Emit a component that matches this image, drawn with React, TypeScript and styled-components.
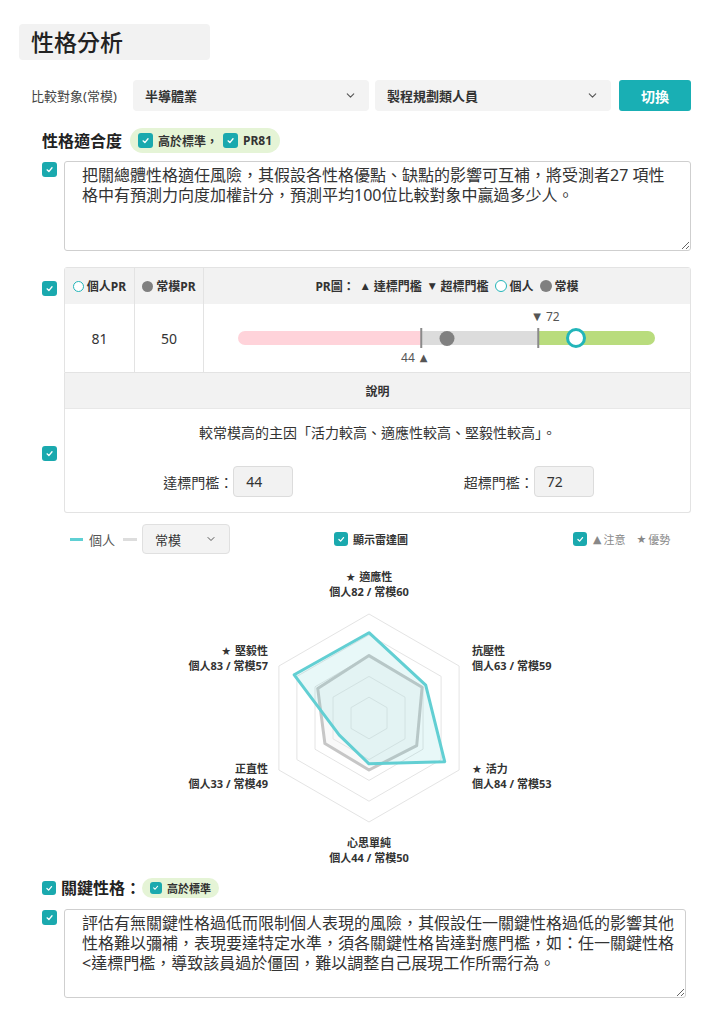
import React from "react";
import styled, { createGlobalStyle } from "styled-components";
import { ChevronDown } from "lucide-react";

const TEAL = "#1aa9ae";
const RING = "#22b5b9";

const GlobalStyle = createGlobalStyle`
  html, body { margin: 0; padding: 0; background: #fff; }
  body { font-family: "Noto Sans", "Noto Sans CJK TC", sans-serif; color: #333; }
  * { box-sizing: border-box; }
`;

const Page = styled.div`
  width: 711px;
  padding: 24px 20px 0 19px;
`;

const TitleBox = styled.div`
  width: 191px;
  height: 36px;
  background: #f2f2f2;
  border-radius: 4px;
  display: flex;
  align-items: center;
  padding-left: 12px;
  font-size: 23px;
  font-weight: 500;
  color: #222;
  line-height: 1;
`;

const CompareRow = styled.div`
  margin-top: 20px;
  height: 31px;
  display: flex;
  align-items: center;
  padding-left: 12px;
`;

const CompareLabel = styled.span`
  width: 104px;
  font-size: 13px;
  color: #444;
`;

const SelectBox = styled.div<{ $w: number; $h: number; $mr: number; $bold?: boolean; $bordered?: boolean }>`
  width: ${(p) => p.$w}px;
  height: ${(p) => p.$h}px;
  background: #f3f3f3;
  border-radius: 4px;
  border: ${(p) => (p.$bordered ? "1px solid #e0e0e0" : "none")};
  display: flex;
  align-items: center;
  justify-content: space-between;
  padding: 0 12px 0 12px;
  font-size: 13px;
  font-weight: ${(p) => (p.$bold ? 700 : 400)};
  color: #333;
  margin-right: ${(p) => p.$mr}px;
  flex: none;
`;

const SwitchButton = styled.button`
  width: 73px;
  height: 31px;
  border: none;
  border-radius: 3px;
  background: #19afb4;
  color: #fff;
  font-family: inherit;
  font-size: 14px;
  font-weight: 700;
`;

const SectionHeader = styled.div<{ $mt: number; $gap: number }>`
  margin-top: ${(p) => p.$mt}px;
  padding-left: 23px;
  display: flex;
  align-items: center;
  gap: ${(p) => p.$gap}px;
`;

const SectionTitle = styled.span`
  font-size: 16px;
  font-weight: 700;
  color: #222;
  line-height: 1;
`;

const Pill = styled.div<{ $h: number; $size: number; $ml?: number }>`
  height: ${(p) => p.$h}px;
  border-radius: ${(p) => p.$h / 2}px;
  background: #e5f4d6;
  display: flex;
  align-items: center;
  gap: 5px;
  padding: 0 8px 0 8px;
  margin-left: ${(p) => p.$ml ?? 0}px;
  font-size: ${(p) => p.$size}px;
  font-weight: 700;
  color: #333;
`;

const CheckSquare = styled.span<{ $s: number }>`
  width: ${(p) => p.$s}px;
  height: ${(p) => p.$s}px;
  border-radius: 3px;
  background: ${TEAL};
  display: inline-flex;
  align-items: center;
  justify-content: center;
  flex: none;
`;

const Check = ({ s = 15 }: { s?: number }) => (
  <CheckSquare $s={s}>
    <svg width={s * 0.6} height={s * 0.6} viewBox="0 0 10 10">
      <path d="M2.3 5.4 L4.3 7.3 L7.8 3.1" stroke="#fff" strokeWidth="1.5" fill="none" strokeLinecap="round" strokeLinejoin="round" />
    </svg>
  </CheckSquare>
);

const CheckRow = styled.div<{ $mt: number }>`
  margin-top: ${(p) => p.$mt}px;
  padding-left: 23px;
  display: flex;
  align-items: flex-start;
  gap: 7px;
`;

const CheckSlot = styled.div<{ $top: number }>`
  width: 15px;
  padding-top: ${(p) => p.$top}px;
  flex: none;
  display: flex;
`;

const NoteArea = styled.textarea<{ $w: number; $h: number; $pr: number }>`
  width: ${(p) => p.$w}px;
  height: ${(p) => p.$h}px;
  border: 1px solid #cfcfcf;
  border-radius: 3px;
  padding: 3px ${(p) => p.$pr}px 3px 17px;
  font-family: inherit;
  font-size: 16px;
  line-height: 20px;
  color: #333;
  background: #fff;
  outline: none;
`;

/* PR table */
const TableBlock = styled.div`
  width: 627px;
`;

const PRGrid = styled.div`
  display: grid;
  grid-template-columns: 70px 69px 1fr;
  border: 1px solid #e3e3e3;
  border-radius: 3px 3px 0 0;
`;

const HeadCell = styled.div<{ $last?: boolean }>`
  height: 36px;
  background: #f2f2f2;
  border-right: ${(p) => (p.$last ? "none" : "1px solid #e3e3e3")};
  display: flex;
  align-items: center;
  justify-content: center;
  gap: 3px;
  font-size: 12px;
  font-weight: 700;
  color: #333;
`;

const DataCell = styled.div<{ $last?: boolean }>`
  height: 68px;
  border-right: ${(p) => (p.$last ? "none" : "1px solid #e3e3e3")};
  display: flex;
  align-items: center;
  justify-content: center;
  font-size: 14px;
  color: #333;
`;

const BarCell = styled.div`
  height: 68px;
  padding: 27px 0 0 34px;
`;

const Ring = styled.span<{ $s: number; $bw: number; $ml?: number }>`
  width: ${(p) => p.$s}px;
  height: ${(p) => p.$s}px;
  border-radius: 50%;
  border: ${(p) => p.$bw}px solid ${RING};
  background: #fff;
  display: inline-block;
  flex: none;
  margin-left: ${(p) => p.$ml ?? 0}px;
`;

const Dot = styled.span<{ $s: number; $ml?: number }>`
  width: ${(p) => p.$s}px;
  height: ${(p) => p.$s}px;
  border-radius: 50%;
  background: #808080;
  display: inline-block;
  flex: none;
  margin-left: ${(p) => p.$ml ?? 0}px;
`;

const Tri = styled.span`
  font-family: "DejaVu Sans", sans-serif;
  font-size: 9px;
  color: #333;
  margin: 0 2px 0 4px;
`;

const BarWrap = styled.div`
  position: relative;
  width: 417px;
  height: 14px;
`;

const Track = styled.div`
  display: flex;
  width: 100%;
  height: 100%;
  border-radius: 7px;
  overflow: hidden;
`;

const Segment = styled.div<{ $c: string }>`
  height: 100%;
  background: ${(p) => p.$c};
`;

const Divider = styled.div`
  position: absolute;
  top: -3px;
  width: 1.5px;
  height: 20px;
  background: #8a8a8a;
  transform: translateX(-50%);
`;

const BarDot = styled.div`
  position: absolute;
  top: -0.5px;
  width: 15px;
  height: 15px;
  border-radius: 50%;
  background: #808080;
  transform: translateX(-50%);
`;

const BarRing = styled.div`
  position: absolute;
  top: -3px;
  width: 20px;
  height: 20px;
  border-radius: 50%;
  border: 3px solid ${RING};
  background: #fff;
  transform: translateX(-50%);
`;

const MarkLabel = styled.div<{ $pos: "above" | "below" }>`
  position: absolute;
  top: ${(p) => (p.$pos === "above" ? "-21px" : "20px")};
  font-size: 12px;
  line-height: 14px;
  color: #555;
  white-space: nowrap;
  display: flex;
  align-items: center;
  gap: 5px;
`;

const SmallTri = styled.span`
  font-family: "DejaVu Sans", sans-serif;
  font-size: 10px;
  color: #555;
`;

const DescBox = styled.div`
  border: 1px solid #e3e3e3;
  border-top: none;
  border-radius: 0 0 3px 3px;
`;

const DescHead = styled.div`
  height: 36px;
  background: #f2f2f2;
  border-bottom: 1px solid #e8e8e8;
  display: flex;
  align-items: center;
  justify-content: center;
  font-size: 12px;
  font-weight: 700;
  color: #333;
`;

const DescBody = styled.div`
  height: 103px;
  padding-top: 15px;
`;

const DescText = styled.div`
  text-align: center;
  font-size: 14px;
  line-height: 18px;
  color: #333;
`;

const ThresholdRow = styled.div`
  margin-top: 24px;
  display: grid;
  grid-template-columns: 1fr 1fr;
`;

const Threshold = styled.div<{ $shift: number }>`
  display: flex;
  align-items: center;
  justify-content: center;
  font-size: 14px;
  color: #333;
  transform: translateX(${(p) => p.$shift}px);
`;

const ValueBox = styled.div`
  width: 60px;
  height: 31px;
  background: #f2f2f2;
  border: 1px solid #dcdcdc;
  border-radius: 4px;
  display: flex;
  align-items: center;
  padding-left: 12px;
  font-size: 14px;
  color: #333;
`;

/* Legend row */
const LegendRow = styled.div`
  margin-top: 11px;
  height: 30px;
  padding-left: 51px;
  display: flex;
  align-items: center;
`;

const LegendLine = styled.span<{ $c: string; $w: number; $mr: number }>`
  width: ${(p) => p.$w}px;
  height: 3px;
  background: ${(p) => p.$c};
  margin-right: ${(p) => p.$mr}px;
  flex: none;
`;

const LegendText = styled.span<{ $mr: number }>`
  font-size: 13px;
  color: #555;
  margin-right: ${(p) => p.$mr}px;
`;

const ToggleGroup = styled.div<{ $ml: number; $muted?: boolean }>`
  margin-left: ${(p) => p.$ml}px;
  display: flex;
  align-items: center;
  gap: 5px;
  font-size: 11px;
  font-weight: ${(p) => (p.$muted ? 400 : 700)};
  color: ${(p) => (p.$muted ? "#888" : "#333")};
`;

const MutedItem = styled.span<{ $ml: number }>`
  margin-left: ${(p) => p.$ml}px;
  white-space: nowrap;
  display: inline-flex;
  align-items: center;
`;

const Glyph = styled.span`
  font-family: "DejaVu Sans", sans-serif;
  font-size: 11px;
  margin-right: 2px;
`;

/* Radar */
const RadarSvg = styled.svg`
  display: block;
`;

const axes = [
  { name: "適應性", star: true, p: 82, n: 60, x: 350, y: 24, anchor: "middle" },
  { name: "抗壓性", star: false, p: 63, n: 59, x: 453, y: 98, anchor: "start" },
  { name: "活力", star: true, p: 84, n: 53, x: 453, y: 216, anchor: "start" },
  { name: "心思單純", star: false, p: 44, n: 50, x: 350, y: 290, anchor: "middle" },
  { name: "正直性", star: false, p: 33, n: 49, x: 249, y: 216, anchor: "end" },
  { name: "堅毅性", star: true, p: 83, n: 57, x: 249, y: 98, anchor: "end" },
] as const;

const CX = 350;
const CY = 164;
const R = 104;

const pt = (i: number, v: number) => {
  const a = -Math.PI / 2 + (i * Math.PI) / 3;
  return `${(CX + ((R * v) / 100) * Math.cos(a)).toFixed(1)},${(CY + ((R * v) / 100) * Math.sin(a)).toFixed(1)}`;
};

const poly = (vals: number[]) => vals.map((v, i) => pt(i, v)).join(" ");

const Radar = () => (
  <RadarSvg width="672" height="318" viewBox="0 0 672 318">
    {[20, 40, 60, 80, 100].map((l) => (
      <polygon key={l} points={poly([l, l, l, l, l, l])} fill="none" stroke="#e4e4e4" strokeWidth="1" />
    ))}
    <polygon points={poly(axes.map((a) => a.n))} fill="rgba(235,235,235,0.3)" stroke="#c6c6c6" strokeWidth="3" strokeLinejoin="round" />
    <polygon points={poly(axes.map((a) => a.p))} fill="rgba(98,207,211,0.15)" stroke="#62cfd3" strokeWidth="3" strokeLinejoin="round" />
    {axes.map((a) => (
      <g key={a.name} fontSize="11" fontWeight="700" fill="#333" textAnchor={a.anchor}>
        <text x={a.x} y={a.y} dominantBaseline="middle">
          {a.star && <tspan fontSize="11" fontFamily="DejaVu Sans">★ </tspan>}
          {a.name}
        </text>
        <text x={a.x} y={a.y + 15} dominantBaseline="middle">
          個人{a.p} / 常模{a.n}
        </text>
      </g>
    ))}
  </RadarSvg>
);

const pr = { personal: 81, norm: 50, reach: 44, exceed: 72 };

export default function App() {
  return (
    <Page>
      <GlobalStyle />
      <TitleBox>性格分析</TitleBox>

      <CompareRow>
        <CompareLabel>比較對象(常模)</CompareLabel>
        <SelectBox $w={236} $h={31} $mr={6} $bold>
          半導體業
          <ChevronDown size={13} strokeWidth={2} color="#555" />
        </SelectBox>
        <SelectBox $w={236} $h={31} $mr={8} $bold>
          製程規劃類人員
          <ChevronDown size={13} strokeWidth={2} color="#555" />
        </SelectBox>
        <SwitchButton>切換</SwitchButton>
      </CompareRow>

      <SectionHeader $mt={17} $gap={8}>
        <SectionTitle>性格適合度</SectionTitle>
        <Pill $h={25} $size={12}>
          <Check s={15} />
          <span>高於標準，</span>
          <Check s={15} />
          <span>PR81</span>
        </Pill>
      </SectionHeader>

      <CheckRow $mt={8}>
        <CheckSlot $top={1}>
          <Check s={15} />
        </CheckSlot>
        <NoteArea
          $w={627}
          $h={90}
          $pr={18}
          readOnly
          value="把關總體性格適任風險，其假設各性格優點、缺點的影響可互補，將受測者27 項性格中有預測力向度加權計分，預測平均100位比較對象中贏過多少人。"
        />
      </CheckRow>

      <CheckRow $mt={16}>
        <CheckSlot $top={14}>
          <Check s={15} />
        </CheckSlot>
        <TableBlock>
          <PRGrid>
            <HeadCell>
              <Ring $s={11} $bw={1.5} />
              個人PR
            </HeadCell>
            <HeadCell>
              <Dot $s={11} />
              常模PR
            </HeadCell>
            <HeadCell $last>
              PR圖：<Tri>▲</Tri>達標門檻<Tri>▼</Tri>超標門檻
              <Ring $s={12} $bw={1.5} $ml={3} />
              個人
              <Dot $s={12} $ml={3} />
              常模
            </HeadCell>
            <DataCell>{pr.personal}</DataCell>
            <DataCell>{pr.norm}</DataCell>
            <BarCell>
              <BarWrap>
                <Track>
                  <Segment $c="#ffd3da" style={{ width: `${pr.reach}%` }} />
                  <Segment $c="#dcdcdc" style={{ width: `${pr.exceed - pr.reach}%` }} />
                  <Segment $c="#b9dc7d" style={{ width: `${100 - pr.exceed}%` }} />
                </Track>
                <Divider style={{ left: `${pr.reach}%` }} />
                <Divider style={{ left: `${pr.exceed}%` }} />
                <BarDot style={{ left: `${pr.norm}%` }} />
                <BarRing style={{ left: `${pr.personal}%` }} />
                <MarkLabel $pos="above" style={{ left: `calc(${pr.exceed}% - 5px)` }}>
                  <SmallTri>▼</SmallTri>
                  {pr.exceed}
                </MarkLabel>
                <MarkLabel $pos="below" style={{ left: `calc(${pr.reach}% + 6px)`, transform: "translateX(-100%)" }}>
                  {pr.reach}
                  <SmallTri>▲</SmallTri>
                </MarkLabel>
              </BarWrap>
            </BarCell>
          </PRGrid>
        </TableBlock>
      </CheckRow>

      <CheckRow $mt={0}>
        <CheckSlot $top={73}>
          <Check s={15} />
        </CheckSlot>
        <TableBlock>
          <DescBox>
            <DescHead>說明</DescHead>
            <DescBody>
              <DescText>較常模高的主因「活力較高、適應性較高、堅毅性較高」。</DescText>
              <ThresholdRow>
                <Threshold $shift={7}>
                  達標門檻：<ValueBox>{pr.reach}</ValueBox>
                </Threshold>
                <Threshold $shift={-5}>
                  超標門檻：<ValueBox>{pr.exceed}</ValueBox>
                </Threshold>
              </ThresholdRow>
            </DescBody>
          </DescBox>
        </TableBlock>
      </CheckRow>

      <LegendRow>
        <LegendLine $c="#5fd0d4" $w={13} $mr={6} />
        <LegendText $mr={8}>個人</LegendText>
        <LegendLine $c="#dddddd" $w={14} $mr={5} />
        <SelectBox $w={88} $h={30} $mr={0} $bordered>
          常模
          <ChevronDown size={12} strokeWidth={2} color="#555" />
        </SelectBox>
        <ToggleGroup $ml={104}>
          <Check s={14} />
          <span>顯示雷達圖</span>
        </ToggleGroup>
        <ToggleGroup $ml={165} $muted>
          <Check s={14} />
          <MutedItem $ml={1}>
            <Glyph>▲</Glyph>注意
          </MutedItem>
          <MutedItem $ml={6}>
            <Glyph>★</Glyph>優勢
          </MutedItem>
        </ToggleGroup>
      </LegendRow>

      <Radar />

      <SectionHeader $mt={6} $gap={5}>
        <Check s={14} />
        <SectionTitle>關鍵性格：</SectionTitle>
        <Pill $h={20} $size={11} $ml={-4}>
          <Check s={12} />
          <span>高於標準</span>
        </Pill>
      </SectionHeader>

      <CheckRow $mt={11}>
        <CheckSlot $top={1}>
          <Check s={15} />
        </CheckSlot>
        <NoteArea
          $w={622}
          $h={89}
          $pr={8}
          readOnly
          value="評估有無關鍵性格過低而限制個人表現的風險，其假設任一關鍵性格過低的影響其他性格難以彌補，表現要達特定水準，須各關鍵性格皆達對應門檻，如：任一關鍵性格<達標門檻，導致該員過於僵固，難以調整自己展現工作所需行為。"
        />
      </CheckRow>
    </Page>
  );
}
